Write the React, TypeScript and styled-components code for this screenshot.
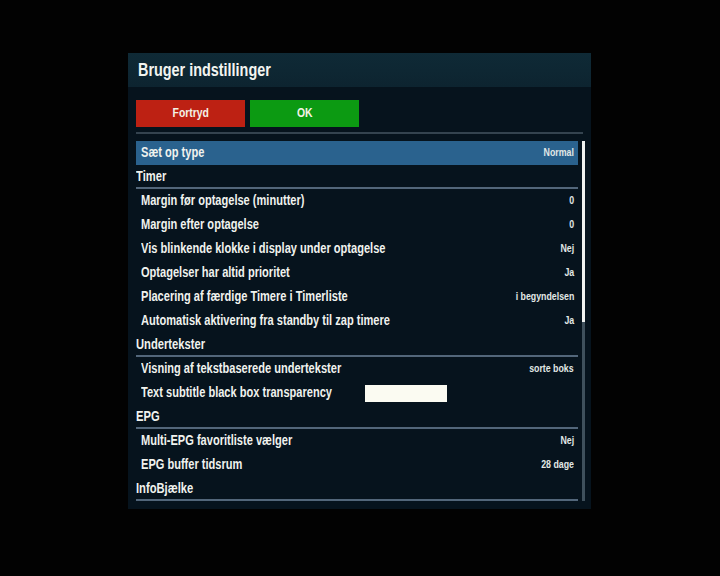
import styled, { createGlobalStyle } from 'styled-components';

type Item = {
  label: string;
  value?: string;
  kind?: 'header' | 'selected' | 'slider';
};

const items: Item[] = [
  { label: 'Sæt op type', value: 'Normal', kind: 'selected' },
  { label: 'Timer', kind: 'header' },
  { label: 'Margin før optagelse (minutter)', value: '0' },
  { label: 'Margin efter optagelse', value: '0' },
  { label: 'Vis blinkende klokke i display under optagelse', value: 'Nej' },
  { label: 'Optagelser har altid prioritet', value: 'Ja' },
  { label: 'Placering af færdige Timere i Timerliste', value: 'i begyndelsen' },
  { label: 'Automatisk aktivering fra standby til zap timere', value: 'Ja' },
  { label: 'Undertekster', kind: 'header' },
  { label: 'Visning af tekstbaserede undertekster', value: 'sorte boks' },
  { label: 'Text subtitle black box transparency', kind: 'slider' },
  { label: 'EPG', kind: 'header' },
  { label: 'Multi-EPG favoritliste vælger', value: 'Nej' },
  { label: 'EPG buffer tidsrum', value: '28 dage' },
  { label: 'InfoBjælke', kind: 'header' },
];

const App = () => {
  return (
    <>
      <GlobalStyle />
      <SScreen>
        <SWindow>
          <STitleBar>
            <SNarrow>Bruger indstillinger</SNarrow>
          </STitleBar>
          <SButtonRow>
            <SButton $color="#bd2113">
              <SNarrow $center>Fortryd</SNarrow>
            </SButton>
            <SButton $color="#0c9a12">
              <SNarrow $center>OK</SNarrow>
            </SButton>
          </SButtonRow>
          <SDivider />
          <SListArea>
            <SList>
              {items.map((item) => {
                if (item.kind === 'header') {
                  return (
                    <SHeaderRow key={item.label}>
                      <SNarrow>{item.label}</SNarrow>
                    </SHeaderRow>
                  );
                }
                return (
                  <SRow key={item.label} $selected={item.kind === 'selected'}>
                    <SLabel>{item.label}</SLabel>
                    {item.kind === 'slider' ? <SSliderBox /> : <SValue>{item.value}</SValue>}
                  </SRow>
                );
              })}
            </SList>
            <SScrollbar>
              <SScrollThumb />
            </SScrollbar>
          </SListArea>
        </SWindow>
      </SScreen>
    </>
  );
};

export default App;

const GlobalStyle = createGlobalStyle`
  html, body {
    margin: 0;
    padding: 0;
    background: #020202;
  }
  * {
    box-sizing: border-box;
  }
`;

const SScreen = styled.div`
  width: 720px;
  height: 576px;
  padding: 53px 0 0 128px;
  background: #020202;
  font-family: 'Liberation Sans', Arial, sans-serif;
  font-weight: 700;
  color: #f0f2ee;
`;

const SWindow = styled.div`
  width: 463px;
  height: 456px;
  background: #06131d;
  display: flex;
  flex-direction: column;
`;

// the receiver font is a condensed bold sans, squeeze Liberation Sans to match
const SNarrow = styled.span<{ $center?: boolean; $right?: boolean }>`
  display: inline-block;
  white-space: nowrap;
  transform: scaleX(0.8);
  transform-origin: ${(p) => (p.$center ? 'center' : p.$right ? 'right' : 'left')} center;
`;

const STitleBar = styled.div`
  height: 34px;
  padding-left: 10px;
  display: flex;
  align-items: center;
  background: linear-gradient(#0f2a36, #0d2430);
  font-size: 18px;
  color: #f2f4f0;
`;

const SButtonRow = styled.div`
  display: flex;
  gap: 5px;
  padding: 13px 0 0 8px;
`;

const SButton = styled.div<{ $color: string }>`
  width: 109px;
  height: 27px;
  padding-bottom: 3px;
  background: ${(p) => p.$color};
  display: flex;
  align-items: center;
  justify-content: center;
  font-size: 13px;
  color: #f4f2e6;
`;

const SDivider = styled.div`
  margin: 5px 8px 0 8px;
  height: 2px;
  background: #34434f;
`;

const SListArea = styled.div`
  display: flex;
  padding: 7px 0 0 8px;
  gap: 4px;
`;

const SList = styled.div`
  width: 442px;
  display: flex;
  flex-direction: column;
`;

const SRow = styled.div<{ $selected?: boolean }>`
  height: 24px;
  padding: 0 4px 2px 5px;
  display: flex;
  align-items: center;
  justify-content: space-between;
  background: ${(p) => (p.$selected ? '#2a628e' : 'transparent')};
`;

const SHeaderRow = styled.div`
  height: 24px;
  display: flex;
  align-items: center;
  border-bottom: 2px solid #52667a;
  font-size: 14px;
`;

const SLabel = styled(SNarrow)`
  min-width: 0;
  font-size: 14px;
  transform: scaleX(0.79);
`;

const SValue = styled(SNarrow).attrs({ $right: true })`
  flex-shrink: 0;
  font-size: 11px;
  color: #e2e8e6;
`;

const SSliderBox = styled.div`
  flex-shrink: 0;
  width: 82px;
  height: 17px;
  margin: 2px 127px 0 0;
  background: #fbfbf2;
`;

const SScrollbar = styled.div`
  width: 3px;
  height: 360px;
  background: #3f505c;
`;

const SScrollThumb = styled.div`
  width: 3px;
  height: 181px;
  background: #f0f2f0;
`;
